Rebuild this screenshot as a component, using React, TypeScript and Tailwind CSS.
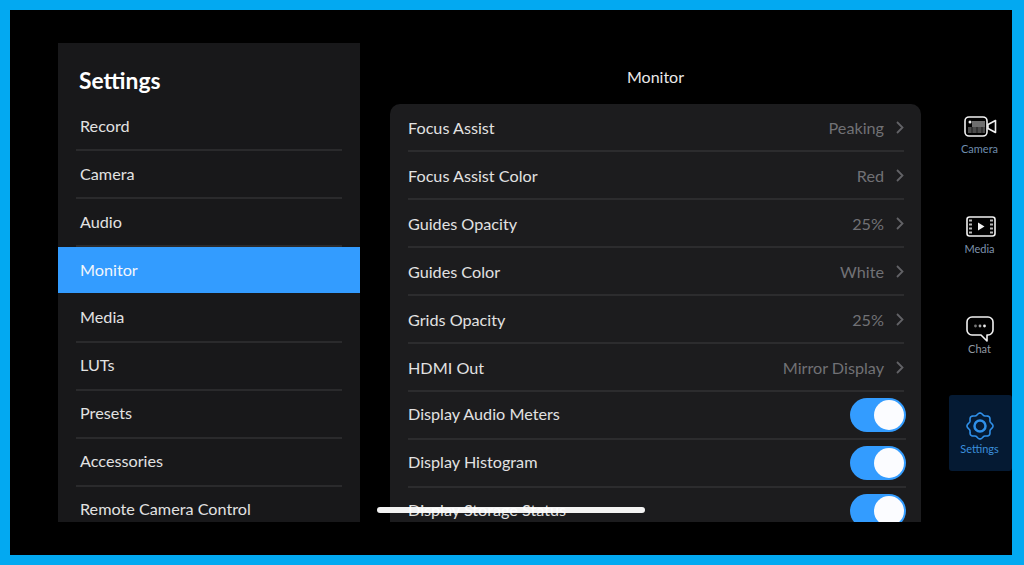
const left = ["Record", "Camera", "Audio", "Monitor", "Media", "LUTs", "Presets", "Accessories", "Remote Camera Control"];
const right: [string, string][] = [
  ["Focus Assist", "Peaking"],
  ["Focus Assist Color", "Red"],
  ["Guides Opacity", "25%"],
  ["Guides Color", "White"],
  ["Grids Opacity", "25%"],
  ["HDMI Out", "Mirror Display"],
];
const toggles = ["Display Audio Meters", "Display Histogram", "Display Storage Status"];

function gearPath() {
  const pts: string[] = [];
  for (let i = 0; i < 96; i++) {
    const t = (i / 96) * Math.PI * 2;
    const r = 12 + 1 * Math.cos(8 * t);
    const x = 14 + r * Math.sin(t);
    const y = 14 - r * Math.cos(t);
    pts.push(`${i === 0 ? "M" : "L"}${x.toFixed(2)} ${y.toFixed(2)}`);
  }
  return pts.join(" ") + " Z";
}

function Chevron() {
  return (
    <svg width="8" height="13" viewBox="0 0 8 13" fill="none" stroke="#626266" strokeWidth="1.8">
      <path d="M1 1l5.500 5.500L1 12" />
    </svg>
  );
}

function Toggle() {
  return (
    <div className="flex h-[34px] w-[56px] items-center justify-end rounded-full bg-[#339cff] pr-[2px]">
      <div className="h-[30px] w-[30px] rounded-full bg-[#fbfcff]" />
    </div>
  );
}

function CameraIcon() {
  return (
    <svg className="ml-[2px] mt-[2px] shrink-0" width="33" height="21" viewBox="0 0 33 21" fill="none">
      <rect x="1" y="1" width="22" height="19" rx="4" stroke="#f2f2f2" strokeWidth="1.6" />
      <path d="M24 8.500l7.500-4v12l-7.500-4z" stroke="#f2f2f2" strokeWidth="1.6" strokeLinejoin="round" />
      <rect x="8" y="5" width="13" height="6" fill="#6e6e6e" />
      <rect x="4" y="11" width="17" height="6" fill="#4a4a4a" />
      <circle cx="6" cy="6" r="1.500" fill="#f2f2f2" />
      <path d="M8 11v6M13 11v6M18 11v6" stroke="#1a1a1a" strokeWidth="1" />
    </svg>
  );
}

function MediaIcon() {
  return (
    <svg className="ml-[2px] mt-[2px] shrink-0" width="30" height="21" viewBox="0 0 30 21" fill="none">
      <rect x="1" y="1" width="28" height="19" rx="2.500" stroke="#f2f2f2" strokeWidth="1.600" />
      <path d="M3 4.500h3M3 8.500h3M3 12.500h3M3 16.500h3M24 4.500h3M24 8.500h3M24 12.500h3M24 16.500h3" stroke="#b8b8b8" strokeWidth="2" />
      <path d="M12 6.500v8l6.500-4z" fill="#f2f2f2" />
    </svg>
  );
}

function ChatIcon() {
  return (
    <svg className="ml-[1px] mt-[8px] shrink-0" width="28" height="27" viewBox="0 0 28 27" fill="none">
      <path d="M6 1h16a5 5 0 0 1 5 5v8a5 5 0 0 1-5 5h-1v6l-6-6H6a5 5 0 0 1-5-5V6a5 5 0 0 1 5-5z" stroke="#f2f2f2" strokeWidth="1.600" strokeLinejoin="round" />
      <circle cx="9.500" cy="10" r="1.400" fill="#777" />
      <circle cx="14" cy="10" r="1.400" fill="#aaa" />
      <circle cx="18.500" cy="10" r="1.400" fill="#eee" />
    </svg>
  );
}

function GearIcon() {
  return (
    <svg className="mt-[2px] shrink-0" width="28" height="28" viewBox="0 0 28 28" fill="none" stroke="#2f8fe8">
      <path strokeWidth="1.600" strokeLinejoin="round" d={gearPath()} />
      <circle cx="14" cy="14" r="5.500" strokeWidth="2.500" />
    </svg>
  );
}

function Nav({ label, children, active, color }: { label: string; children: React.ReactNode; active?: boolean; color: string }) {
  return (
    <div className={`flex h-[76px] w-[63px] flex-col items-center justify-center gap-[3px] rounded-[3px] pr-[2px] ${active ? "bg-[#051a33]" : ""}`}>
      <div className="flex h-[28px] items-center justify-center">{children}</div>
      <span className={`text-[11px] leading-[13px] ${color}`}>{label}</span>
    </div>
  );
}

export default function App() {
  return (
    <div
      className="relative flex h-[565px] w-[1024px] overflow-hidden border-t-[10px] border-r-[12px] border-b-[10px] border-l-[10px] border-[#03a9f1] bg-black"
      style={{ fontFamily: "Lato, 'Liberation Sans', sans-serif" }}
    >
      <aside className="mt-[33px] ml-[48px] h-[479px] w-[302px] shrink-0 overflow-hidden bg-[#18181a]">
        <h1 className="ml-[21px] mt-[22px] h-[38px] text-[22.8px] font-bold leading-[30px] text-white">Settings</h1>
        <div className="flex flex-col">
          {left.map((l, i) =>
            l === "Monitor" ? (
              <div key={l} className="h-[48px] shrink-0">
                <div className="flex h-[46px] items-center bg-[#339cff] pl-[22px] text-[16.2px] text-[#f2f6fb]">{l}</div>
              </div>
            ) : (
              <div key={l} className="ml-[18px] mr-[18px] flex h-[48px] shrink-0 items-center border-b-2 border-[#2a2a2c] pl-[4px] text-[16.2px] text-[#e2e2e2]">
                <span className={i > 3 ? "-mt-[2px]" : ""}>{l}</span>
              </div>
            )
          )}
        </div>
      </aside>

      <main className="ml-[30px] flex w-[531px] shrink-0 flex-col">
        <div className="flex h-[94px] items-end justify-center pb-[17px] text-[16px] leading-[20px] text-[#eaeaea]">Monitor</div>
        <div className="h-[418px] overflow-hidden rounded-t-[10px] bg-[#1c1c1e] pl-[18px] pr-[17px]">
          {right.map(([a, b]) => (
            <div key={a} className="flex h-[48px] items-center justify-between border-b-2 border-[#2c2c2e] pt-[2px] text-[16.2px] text-[#e2e2e2]">
              <span>{a}</span>
              <span className="flex items-center gap-[12px] text-[#717175]">
                {b}
                <Chevron />
              </span>
            </div>
          ))}
          {toggles.map((a) => (
            <div key={a} className="-mr-[2px] flex h-[48px] items-center justify-between border-b-2 border-[#2c2c2e] text-[16.2px] text-[#e2e2e2]">
              <span className="-mt-[2px]">{a}</span>
              <Toggle />
            </div>
          ))}
        </div>
      </main>

      <nav className="ml-[28px] mt-[85px] flex w-[63px] flex-col items-center gap-[24px]">
        <Nav label="Camera" color="text-[#6f8dae]"><CameraIcon /></Nav>
        <Nav label="Media" color="text-[#7f93ad]"><MediaIcon /></Nav>
        <Nav label="Chat" color="text-[#9098a2]"><ChatIcon /></Nav>
        <Nav label="Settings" active color="text-[#3b8fdc]"><GearIcon /></Nav>
      </nav>

      <div className="absolute left-[367px] top-[497px] h-[6px] w-[268px] rounded-full bg-white/95" />
    </div>
  );
}
